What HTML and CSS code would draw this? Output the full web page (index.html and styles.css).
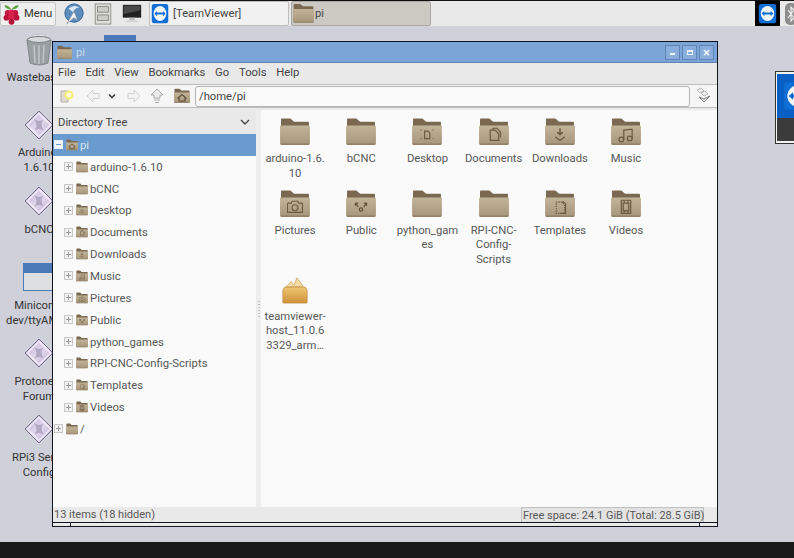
FILE: index.html
```html
<!DOCTYPE html>
<html lang="en">
<head>
    <meta charset="UTF-8">
    <title>pi</title>
    <link rel="stylesheet" href="styles.css">
</head>
<body>
    <svg class="defs" width="0" height="0">
        <defs>
            <linearGradient id="folderFront" x1="0" y1="0" x2="0" y2="1">
                <stop offset="0" stop-color="#c2b498"/>
                <stop offset="1" stop-color="#a6957a"/>
            </linearGradient>
            <linearGradient id="gemFill" x1="0" y1="0" x2="1" y2="1">
                <stop offset="0" stop-color="#b9a5d6"/>
                <stop offset="0.5" stop-color="#e2d9ec"/>
                <stop offset="1" stop-color="#b9a5d6"/>
            </linearGradient>
            <linearGradient id="boxFill" x1="0" y1="0" x2="0" y2="1">
                <stop offset="0" stop-color="#efc673"/>
                <stop offset="1" stop-color="#d0923a"/>
            </linearGradient>
            <symbol id="folder" viewBox="0 0 32 30">
                <path d="M1 1.5Q1 .5 2 .5H11L15 4H30Q31 4 31 5V12H1Z" fill="#7a6850"/>
                <path d="M1 8H31Q32 8 32 9V27Q32 29 30 29H2Q0 29 0 27V9Q0 8 1 8Z" fill="url(#folderFront)"/>
                <path d="M1 28H31" stroke="#8b7a60" stroke-width="1.2"/>
            </symbol>
            <symbol id="em-desktop" viewBox="0 0 32 30">
                <path d="M13.5 14H17L19 16V22H13.5Z" fill="none" stroke="#6b5b44" stroke-width="1.3"/>
                <path d="M9 13H10M22 13H23M9 22H10M22 22H23" stroke="#6b5b44" stroke-width="1.2"/>
            </symbol>
            <symbol id="em-docs" viewBox="0 0 32 30">
                <path d="M12 24V13H17L21 17V24ZM15 13V11H19L23 15V21" fill="none" stroke="#6b5b44" stroke-width="1.3"/>
            </symbol>
            <symbol id="em-down" viewBox="0 0 32 30">
                <path d="M16 11V17M13 15L16 18L19 15" fill="none" stroke="#6b5b44" stroke-width="1.6"/>
                <path d="M11 20L16 24L21 20" fill="none" stroke="#6b5b44" stroke-width="1.3"/>
            </symbol>
            <symbol id="em-music" viewBox="0 0 32 30">
                <circle cx="11" cy="23" r="2.6" fill="none" stroke="#6b5b44" stroke-width="1.3"/>
                <circle cx="20" cy="22" r="2.6" fill="none" stroke="#6b5b44" stroke-width="1.3"/>
                <path d="M13.6 23V13L22.6 12V22" fill="none" stroke="#6b5b44" stroke-width="1.3"/>
            </symbol>
            <symbol id="em-pics" viewBox="0 0 32 30">
                <path d="M9 14H12L13 12H19L20 14H23Q24 14 24 15V24H8V15Q8 14 9 14Z" fill="none" stroke="#6b5b44" stroke-width="1.2"/>
                <circle cx="16" cy="19" r="3.2" fill="none" stroke="#6b5b44" stroke-width="1.2"/>
            </symbol>
            <symbol id="em-public" viewBox="0 0 32 30">
                <circle cx="16" cy="21" r="1.8" fill="none" stroke="#5c4d39" stroke-width="1.2"/>
                <path d="M10 14L13 18M10 14H13M10 14V17M22 14L19 18M22 14H19M22 14V17" fill="none" stroke="#5c4d39" stroke-width="1.2"/>
            </symbol>
            <symbol id="em-templates" viewBox="0 0 32 30">
                <path d="M12 13H18L21 16V25H12Z" fill="none" stroke="#6b5b44" stroke-width="1.2" stroke-dasharray="1.5 1"/>
                <path d="M18 13H20L22 15V25H17" fill="none" stroke="#6b5b44" stroke-width="1.2"/>
            </symbol>
            <symbol id="em-videos" viewBox="0 0 32 30">
                <path d="M11 11H21V25H11ZM14 11V14H18V11M14 25V22H18V25M13 14H19V22H13Z" fill="none" stroke="#6b5b44" stroke-width="1.3"/>
            </symbol>
            <symbol id="em-home" viewBox="0 0 32 30">
                <path d="M7 20L16 12L25 20M10 18V25H22V18" fill="none" stroke="#5c4d39" stroke-width="2.2"/>
            </symbol>
            <symbol id="gem" viewBox="0 0 30 30">
                <path d="M15 1L29 15L15 29L1 15Z" fill="url(#gemFill)" stroke="#77708a" stroke-width="1"/>
                <path d="M15 3.5L26.5 15L15 26.5L3.5 15Z" fill="none" stroke="#f4f0f8" stroke-width="1.2"/>
                <path d="M10 9Q15 13 20 9Q15 15 20 21Q15 17 10 21Q15 15 10 9Z" fill="#8d84a3" opacity=".55"/>
            </symbol>
            <symbol id="tv" viewBox="0 0 24 24" preserveAspectRatio="none">
                <rect x="1" y="1" width="22" height="22" rx="3" fill="#0f6fd6"/>
                <circle cx="12" cy="12" r="8.5" fill="#f1f6fc"/>
                <path d="M4.5 12L8 9V10.8H16V9L19.5 12L16 15V13.2H8V15Z" fill="#0f6fd6"/>
            </symbol>
        </defs>
    </svg>

    <div class="taskbar">
        <button class="menu-btn">
            <svg class="raspberry" viewBox="0 0 20 24">
                <path d="M10 7Q5 1 2 3Q4 7 10 7ZM10 7Q15 1 18 3Q16 7 10 7Z" fill="#5aa53a"/>
                <circle cx="6" cy="11" r="3.4" fill="#c4163f"/>
                <circle cx="14" cy="11" r="3.4" fill="#c4163f"/>
                <circle cx="10" cy="10" r="3" fill="#d6224d"/>
                <circle cx="4.5" cy="16" r="3.2" fill="#b8123a"/>
                <circle cx="15.5" cy="16" r="3.2" fill="#b8123a"/>
                <circle cx="10" cy="15" r="3.6" fill="#d6224d"/>
                <circle cx="10" cy="20.5" r="3.2" fill="#b8123a"/>
            </svg>
            Menu
        </button>
        <svg class="launcher" viewBox="0 0 24 24">
            <circle cx="12" cy="11" r="10" fill="#5c8dbd" stroke="#2f5f94"/>
            <path d="M6 6Q12 1 18 5Q13 5 11 10Q8 8 6 6Z" fill="#dbe7f2"/>
            <path d="M4 23L12 9L16 19L12 16Z" fill="#f2f4f6" stroke="#75818c" stroke-width=".6"/>
        </svg>
        <svg class="launcher" viewBox="0 0 24 24">
            <rect x="3.500" y="1" width="17" height="22" fill="#dededb" stroke="#8d8d88"/>
            <rect x="6" y="4" width="12" height="6" fill="#cbcbc7" stroke="#77776f" stroke-width=".8"/>
            <rect x="6" y="13" width="12" height="6" fill="#cbcbc7" stroke="#77776f" stroke-width=".8"/>
        </svg>
        <svg class="launcher" viewBox="0 0 24 24">
            <rect x="2" y="2" width="20" height="14" fill="#222"/>
            <path d="M3 3H21V8L3 12Z" fill="#4a4a4a"/>
            <rect x="9" y="16" width="6" height="3" fill="#bbb"/>
            <rect x="6" y="19" width="12" height="2" fill="#d4d4d4"/>
        </svg>
        <div class="task task-light">
            <svg class="task-icon tv-icon"><use href="#tv"/></svg>
            [TeamViewer]
        </div>
        <div class="task task-active">
            <svg class="task-icon"><use href="#folder"/></svg>
            pi
        </div>
        <div class="tray">
            <div class="tray-tv"><svg class="tray-icon"><use href="#tv"/></svg></div>
            <svg class="tray-bt" viewBox="0 0 12 22">
                <rect x="0" y="0" width="12" height="22" rx="5" fill="#8d8d8d"/>
                <path d="M3 7L9 15L6 18V4L9 7L3 15" fill="none" stroke="#eee" stroke-width="1.2"/>
            </svg>
        </div>
    </div>

    <div class="desktop">
        <div class="desk-column">
            <div class="desk-item item-waste">
                <svg class="desk-icon" viewBox="0 0 30 34">
                    <path d="M5 8Q8 1 14 3Q20 0 25 8Z" fill="#e9ecef" stroke="#aab0b5" stroke-width=".6"/>
                    <ellipse cx="15" cy="8" rx="12" ry="3.5" fill="#d8dbde" stroke="#71767b"/>
                    <path d="M3 8L6 31Q15 35 24 31L27 8Q15 13 3 8Z" fill="#9a9fa3" stroke="#6d7276" stroke-width=".7"/>
                    <path d="M10 13L11 31M15 13V32M20 13L19 31" stroke="#c4c8cb" stroke-width="1.4"/>
                </svg>
                <span>Wastebasket</span>
            </div>
            <div class="desk-item item-arduino"><svg class="desk-icon gem-icon"><use href="#gem"/></svg><span>Arduino-<br>1.6.10</span></div>
            <div class="desk-item item-bcnc"><svg class="desk-icon gem-icon"><use href="#gem"/></svg><span>bCNC</span></div>
            <div class="desk-item item-minicom">
                <div class="mini-icon"></div>
                <span>Minicom -<br>dev/ttyAMA0</span>
            </div>
            <div class="desk-item item-proto"><svg class="desk-icon gem-icon"><use href="#gem"/></svg><span>Protoneer<br>Forum</span></div>
            <div class="desk-item item-rpi"><svg class="desk-icon gem-icon"><use href="#gem"/></svg><span>RPi3 Serial<br>Config</span></div>
        </div>
        <div class="blue-peek"></div>
        <div class="preview">
            <div class="preview-top"><svg class="preview-icon"><use href="#tv"/></svg></div>
            <div class="preview-bottom"></div>
        </div>

        <div class="window">
            <div class="titlebar">
                <svg class="title-icon"><use href="#folder"/></svg>
                <span class="title-text">pi</span>
                <div class="win-btns">
                    <div class="win-btn"><i class="glyph-min"></i></div>
                    <div class="win-btn"><i class="glyph-max"></i></div>
                    <div class="win-btn"><i class="glyph-close">×</i></div>
                </div>
            </div>
            <div class="menubar">
                <span>File</span><span>Edit</span><span>View</span><span>Bookmarks</span><span>Go</span><span>Tools</span><span>Help</span>
            </div>
            <div class="toolbar">
                <svg class="tool" viewBox="0 0 18 18">
                    <path d="M2 4H9V15H2Z" fill="#dedbd2" stroke="#b5b1a6"/>
                    <circle cx="10" cy="8" r="4.5" fill="#f6ee74"/>
                    <circle cx="10" cy="8" r="2.4" fill="#fffde0"/>
                </svg>
                <svg class="tool tool-back" viewBox="0 0 18 18"><path d="M9 3L3 9L9 15V11.500H15V6.500H9Z" fill="#f2f2f2" stroke="#d2d2d2"/></svg>
                <svg class="tool tool-drop" viewBox="0 0 12 18"><path d="M3 7.500L6 10.500L9 7.500" fill="none" stroke="#333" stroke-width="1.5"/></svg>
                <svg class="tool tool-fwd" viewBox="0 0 18 18"><path d="M9 3L15 9L9 15V11.500H3V6.500H9Z" fill="#f2f2f2" stroke="#d2d2d2"/></svg>
                <svg class="tool tool-up" viewBox="0 0 18 18">
                    <path d="M9 2L15 8H12V11H6V8H3Z" fill="#ececec" stroke="#a9a9a9"/>
                    <path d="M6 13H12M7 15.500H11" stroke="#a9a9a9"/>
                </svg>
                <svg class="tool tool-home"><use href="#folder"/><use href="#em-home"/></svg>
                <div class="path-box">/home/pi</div>
                <svg class="tool tool-go" viewBox="0 0 18 18">
                    <path d="M3 3L7 1L10 4L6 6ZM7 6L11 4L14 7L10 9Z" fill="#eee" stroke="#aaa" stroke-width=".8"/>
                    <path d="M5 10L10 15L16 9L10 12Z" fill="#f4f4f4" stroke="#777"/>
                </svg>
            </div>
            <div class="toolbar-gap"></div>
            <div class="panes">
                <div class="sidebar">
                    <div class="side-head"><span>Directory Tree</span><svg class="side-caret" viewBox="0 0 12 8"><path d="M2 2L6 6L10 2" fill="none" stroke="#444" stroke-width="1.4"/></svg></div>
                    <div class="tree">
                        <div class="row row-top selected"><i class="exp exp-open"></i><svg class="mini"><use href="#folder"/><use href="#em-home"/></svg>pi</div>
                        <div class="row"><i class="exp"></i><svg class="mini"><use href="#folder"/></svg>arduino-1.6.10</div>
                        <div class="row"><i class="exp"></i><svg class="mini"><use href="#folder"/></svg>bCNC</div>
                        <div class="row"><i class="exp"></i><svg class="mini"><use href="#folder"/><use href="#em-desktop"/></svg>Desktop</div>
                        <div class="row"><i class="exp"></i><svg class="mini"><use href="#folder"/><use href="#em-docs"/></svg>Documents</div>
                        <div class="row"><i class="exp"></i><svg class="mini"><use href="#folder"/><use href="#em-down"/></svg>Downloads</div>
                        <div class="row"><i class="exp"></i><svg class="mini"><use href="#folder"/><use href="#em-music"/></svg>Music</div>
                        <div class="row"><i class="exp"></i><svg class="mini"><use href="#folder"/><use href="#em-pics"/></svg>Pictures</div>
                        <div class="row"><i class="exp"></i><svg class="mini"><use href="#folder"/><use href="#em-public"/></svg>Public</div>
                        <div class="row"><i class="exp"></i><svg class="mini"><use href="#folder"/></svg>python_games</div>
                        <div class="row"><i class="exp"></i><svg class="mini"><use href="#folder"/></svg>RPI-CNC-Config-Scripts</div>
                        <div class="row"><i class="exp"></i><svg class="mini"><use href="#folder"/><use href="#em-templates"/></svg>Templates</div>
                        <div class="row"><i class="exp"></i><svg class="mini"><use href="#folder"/><use href="#em-videos"/></svg>Videos</div>
                        <div class="row row-top"><i class="exp"></i><svg class="mini"><use href="#folder"/></svg>/</div>
                    </div>
                </div>
                <div class="splitter"><i></i></div>
                <div class="files">
                    <div class="file"><svg class="big"><use href="#folder"/></svg><span>arduino-1.6.<br>10</span></div>
                    <div class="file"><svg class="big"><use href="#folder"/></svg><span>bCNC</span></div>
                    <div class="file"><svg class="big"><use href="#folder"/><use href="#em-desktop"/></svg><span>Desktop</span></div>
                    <div class="file"><svg class="big"><use href="#folder"/><use href="#em-docs"/></svg><span>Documents</span></div>
                    <div class="file"><svg class="big"><use href="#folder"/><use href="#em-down"/></svg><span>Downloads</span></div>
                    <div class="file"><svg class="big"><use href="#folder"/><use href="#em-music"/></svg><span>Music</span></div>
                    <div class="file"><svg class="big"><use href="#folder"/><use href="#em-pics"/></svg><span>Pictures</span></div>
                    <div class="file"><svg class="big"><use href="#folder"/><use href="#em-public"/></svg><span>Public</span></div>
                    <div class="file"><svg class="big"><use href="#folder"/></svg><span>python_gam<br>es</span></div>
                    <div class="file"><svg class="big"><use href="#folder"/></svg><span>RPI-CNC-<br>Config-<br>Scripts</span></div>
                    <div class="file"><svg class="big"><use href="#folder"/><use href="#em-templates"/></svg><span>Templates</span></div>
                    <div class="file"><svg class="big"><use href="#folder"/><use href="#em-videos"/></svg><span>Videos</span></div>
                    <div class="file">
                        <svg class="big" viewBox="0 0 32 30">
                            <path d="M6 12L12 6L15 10L18 2L25 11Z" fill="#f3dca6" stroke="#c79a4e" stroke-width=".7"/>
                            <path d="M5 12H27L29 15V28Q29 29 28 29H4Q3 29 3 28V15Z" fill="url(#boxFill)" stroke="#b97f2e" stroke-width=".7"/>
                        </svg>
                        <span>teamviewer-<br>host_11.0.6<br>3329_arm…</span>
                    </div>
                </div>
            </div>
            <div class="statusbar">
                <span>13 items (18 hidden)</span>
                <span class="free-space">Free space: 24.1 GiB (Total: 28.5 GiB)</span>
            </div>
            <div class="grip"><i class="tick-left"></i><i class="tick-right"></i></div>
        </div>
    </div>

    <div class="bottom-band"></div>
</body>
</html>
```
FILE: styles.css
```css
html, body {
    margin: 0;
    height: 100%;
}

body {
    width: 794px;
    height: 558px;
    overflow: hidden;
    display: flex;
    flex-direction: column;
    background: #cfd0da;
    font-family: Roboto, "Liberation Sans", sans-serif;
    font-size: 11.25px;
    color: #585858;
}

.defs {
    position: absolute;
}

/* top panel */
.taskbar {
    height: 26px;
    flex: none;
    box-sizing: border-box;
    border-top: 1px solid #111;
    background: #e9e9e9;
    display: flex;
    align-items: center;
}

.menu-btn {
    width: 56px;
    height: 24px;
    padding: 0 0 0 1px;
    border: 1px solid #c6c6c6;
    border-radius: 2px;
    background: #efefef;
    display: flex;
    align-items: center;
    gap: 3px;
    font: inherit;
    color: #333;
}

.raspberry {
    width: 19px;
    height: 22px;
}

.launcher {
    width: 22px;
    height: 22px;
    margin-left: 7px;
}

.task {
    width: 140px;
    height: 25px;
    box-sizing: border-box;
    margin-top: -1px;
    border: 1px solid #bdbdbd;
    border-radius: 2px;
    display: flex;
    align-items: center;
    gap: 4px;
    padding-left: 1px;
    color: #444;
}

.task-light {
    margin-left: 6px;
    background: #f1f1f1;
}

.task-active {
    margin-left: 2px;
    background: #cbc9c2;
    border-color: #a9a7a0;
    gap: 1px;
}

.task-icon {
    width: 21px;
    height: 21px;
}

.tv-icon {
    width: 18px;
}

.tray {
    margin-left: auto;
    display: flex;
    align-items: center;
    gap: 5px;
    margin-right: -3px;
}

.tray-tv {
    width: 25px;
    height: 25px;
    background: #000;
    display: flex;
    align-items: center;
    justify-content: center;
}

.tray-icon {
    width: 19px;
    height: 21px;
}

.tray-bt {
    width: 12px;
    height: 22px;
}

/* desktop canvas */
.desktop {
    position: relative;
    flex: 1;
}

.desk-column {
    position: absolute;
    left: 0;
    top: 0;
    width: 52px;
    height: 100%;
    overflow: hidden;
}

.desk-item {
    position: absolute;
    left: 0;
    width: 78px;
    display: flex;
    flex-direction: column;
    align-items: center;
    color: #333;
    text-align: center;
    line-height: 15px;
}

.desk-icon {
    display: block;
    margin-left: -1px;
}

.gem-icon {
    width: 30px;
    height: 30px;
}

.item-waste { top: 6px; }
.item-waste .desk-icon { width: 30px; height: 34px; margin-bottom: 4px; }
.item-waste span { white-space: nowrap; }
.item-arduino { top: 84px; }
.item-bcnc { top: 160px; }
.item-minicom { top: 237px; }
.item-proto { top: 312px; }
.item-rpi { top: 388px; }

.item-arduino .desk-icon { margin-bottom: 5px; }

.item-proto .desk-icon,
.item-rpi .desk-icon,
.item-bcnc .desk-icon { margin-bottom: 6px; }

.mini-icon {
    width: 60px;
    height: 28px;
    box-sizing: border-box;
    margin-left: 28px;
    margin-bottom: 7px;
    border: 1px solid #4a79b8;
    border-top: 10px solid #4a79b8;
    background: #dedfe0;
}

.blue-peek {
    position: absolute;
    left: 104px;
    top: 9px;
    width: 32px;
    height: 8px;
    background: #4a79b8;
}

.preview {
    position: absolute;
    left: 775px;
    top: 45px;
    width: 30px;
    height: 73px;
    box-sizing: border-box;
    border: 1px solid #333;
    border-right: 0;
    padding: 2px 2px 2px 1px;
    background: #f3f3f3;
    display: flex;
    flex-direction: column;
}

.preview-top {
    height: 44px;
    background: #0a5fc4;
    display: flex;
    align-items: center;
    padding-left: 6px;
}

.preview-icon {
    width: 30px;
    height: 30px;
    flex: none;
}

.preview-bottom {
    flex: 1;
    background: #3b3b3b;
}

/* file manager window */
.window {
    position: absolute;
    left: 52px;
    top: 15px;
    width: 666px;
    height: 486px;
    box-sizing: border-box;
    border: 1px solid #10151f;
    display: flex;
    flex-direction: column;
    background: #e9e9e9;
}

.titlebar {
    height: 21px;
    flex: none;
    box-sizing: border-box;
    background: #7ba5d6;
    border-bottom: 1px solid #5f83b3;
    display: flex;
    align-items: center;
    padding-left: 4px;
    gap: 4px;
    color: #c6d8ee;
}

.title-icon {
    width: 15px;
    height: 15px;
}

.win-btns {
    margin-left: auto;
    display: flex;
    gap: 2px;
    padding-right: 3px;
}

.win-btn {
    width: 15px;
    height: 15px;
    box-sizing: border-box;
    border: 1px solid #5f86b8;
    background: #89aedb;
    display: flex;
    align-items: center;
    justify-content: center;
}

.glyph-min {
    width: 5px;
    height: 2px;
    margin-top: 4px;
    background: #eef3fa;
}

.glyph-max {
    width: 6px;
    height: 5px;
    box-sizing: border-box;
    border: 1px solid #eef3fa;
    border-top-width: 2px;
}

.glyph-close {
    font-style: normal;
    font-weight: 700;
    font-size: 13px;
    line-height: 13px;
    color: #eef3fa;
}

.menubar {
    height: 22px;
    flex: none;
    box-sizing: border-box;
    display: flex;
    align-items: center;
    gap: 9.8px;
    padding: 0 0 2px 5px;
    border-bottom: 1px solid #bcbcbc;
    color: #444;
}

.toolbar {
    height: 23px;
    flex: none;
    box-sizing: border-box;
    background: #f6f6f6;
    border-bottom: 1px solid #bdbdbd;
    display: flex;
    align-items: center;
    padding-left: 6px;
}

.toolbar-gap {
    height: 2px;
    flex: none;
}

.tool {
    width: 18px;
    height: 18px;
    flex: none;
}

.tool-back { margin-left: 7px; }
.tool-drop { width: 12px; margin-left: 4px; }
.tool-fwd { margin-left: 7px; }
.tool-up { margin-left: 5px; }
.tool-home { margin-left: 8px; width: 16px; height: 16px; }

.path-box {
    width: 495px;
    height: 21px;
    box-sizing: border-box;
    margin-left: 5px;
    padding-left: 3px;
    border: 1px solid #b4b4b4;
    border-radius: 3px;
    background: #f9f9f9;
    line-height: 19px;
    color: #444;
}

.tool-go { margin-left: 4px; }

.panes {
    flex: 1;
    min-height: 0;
    display: flex;
}

.sidebar {
    width: 203px;
    flex: none;
    display: flex;
    flex-direction: column;
}

.side-head {
    height: 24px;
    flex: none;
    display: flex;
    align-items: center;
    justify-content: space-between;
    padding: 0 5px 0 5px;
    color: #444;
}

.side-caret {
    width: 12px;
    height: 8px;
}

.tree {
    flex: 1;
    background: #fafafa;
}

.row {
    height: 21.85px;
    display: flex;
    align-items: center;
    padding-left: 10px;
    font-size: 11.35px;
}

.row-top {
    padding-left: 0;
}

.selected {
    background: #6a9bcf;
    color: #d9e5f2;
}

.exp {
    width: 9px;
    height: 9px;
    box-sizing: border-box;
    margin-left: 1px;
    border: 1px solid #c8c8c8;
    background:
        linear-gradient(#9a9a9a, #9a9a9a) center / 5px 1px no-repeat,
        linear-gradient(#9a9a9a, #9a9a9a) center / 1px 5px no-repeat,
        #f2f2f2;
}

.exp-open {
    border-color: #e8eef6;
    background:
        linear-gradient(#6a9bcf, #6a9bcf) center / 5px 1px no-repeat,
        #f2f5f9;
}

.mini {
    width: 12px;
    height: 12px;
    margin: 0 2px 0 3px;
    flex: none;
}

.splitter {
    width: 5px;
    flex: none;
    background: #eeeeee;
    display: flex;
    align-items: center;
    justify-content: center;
}

.splitter i {
    width: 2px;
    height: 16px;
    background: repeating-linear-gradient(#c4c4c4 0 1px, transparent 1px 3px);
}

.files {
    flex: 1;
    background: #fafafa;
    box-sizing: border-box;
    padding: 8px 0 0 1px;
    display: grid;
    grid-template-columns: repeat(6, 66.2px);
    grid-auto-rows: min-content;
    row-gap: 8.5px;
    align-content: start;
}

.file {
    display: flex;
    flex-direction: column;
    align-items: center;
    text-align: center;
    line-height: 14.5px;
}

.big {
    width: 30px;
    height: 28px;
    margin: 0 0 6px 0;
    flex: none;
}

.statusbar {
    height: 16px;
    flex: none;
    box-sizing: border-box;
    display: flex;
    justify-content: space-between;
    align-items: stretch;
    padding: 0 13px 0 1px;
    line-height: 16px;
    font-size: 11px;
    border-bottom: 1px solid #10151f;
}

.free-space {
    box-sizing: border-box;
    width: 183px;
    padding-left: 1px;
    border: 1px solid #c0c0c0;
    border-bottom: 0;
    background: #e3e3e3;
    white-space: nowrap;
    line-height: 15px;
}

.grip {
    height: 3px;
    flex: none;
    position: relative;
}

.grip i {
    position: absolute;
    top: 0;
    width: 1px;
    height: 3px;
    background: #10151f;
}

.tick-left { left: 17px; }
.tick-right { right: 17px; }

.bottom-band {
    height: 16px;
    flex: none;
    background: #1a1a1a;
}
```
